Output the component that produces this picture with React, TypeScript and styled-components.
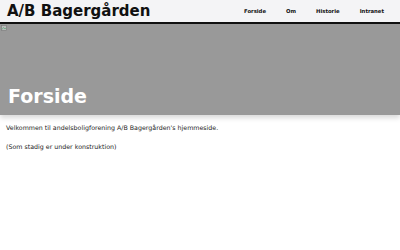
import React from "react";
import styled, { createGlobalStyle } from "styled-components";

const GlobalStyle = createGlobalStyle`
  html, body {
    margin: 0;
    padding: 0;
    background: #ffffff;
    font-family: "DejaVu Sans", Verdana, sans-serif;
    -webkit-font-smoothing: antialiased;
  }
  *, *::before, *::after {
    box-sizing: border-box;
  }
`;

const Header = styled.header`
  display: flex;
  align-items: center;
  justify-content: space-between;
  height: 24px;
  padding: 0 16px 0 7px;
  background-color: #f4f4f6;
  border-bottom: 2px solid #111;
`;

const Brand = styled.h1`
  margin: 0;
  font-size: 15px;
  font-weight: bold;
  color: #111;
  line-height: 22px;
`;

const Nav = styled.nav`
  display: flex;
  gap: 20px;
`;

const NavLink = styled.a`
  font-size: 5.3px;
  font-weight: bold;
  color: #111;
  text-decoration: none;
`;

const Hero = styled.section`
  position: relative;
  height: 91px;
  background-color: #999999;
  display: flex;
  align-items: flex-end;
  padding: 0 8px 8px;
  box-shadow: 0 3px 5px rgba(0, 0, 0, 0.15);
`;

const BrokenImage = styled.svg`
  position: absolute;
  top: 1px;
  left: 1px;
`;

const HeroTitle = styled.h2`
  margin: 0;
  font-size: 19px;
  font-weight: bold;
  color: #ffffff;
`;

const Content = styled.main`
  padding: 9px 6px;
  font-size: 6.3px;
  color: #222;
`;

const Paragraph = styled.p`
  margin: 0 0 11px;
  line-height: 8px;
`;

export default function App() {
  return (
    <>
      <GlobalStyle />
      <Header>
        <Brand>A/B Bagergården</Brand>
        <Nav>
          <NavLink href="#">Forside</NavLink>
          <NavLink href="#">Om</NavLink>
          <NavLink href="#">Historie</NavLink>
          <NavLink href="#">Intranet</NavLink>
        </Nav>
      </Header>
      <Hero>
        <BrokenImage width="6" height="6" viewBox="0 0 6 6">
          <rect x="0.5" y="0.5" width="5" height="5" fill="#bbb" stroke="#777" strokeWidth="0.6" />
          <path d="M1 4.5 L2.5 2.5 L4 4 L5 3" stroke="#5a7" strokeWidth="0.7" fill="none" />
        </BrokenImage>
        <HeroTitle>Forside</HeroTitle>
      </Hero>
      <Content>
        <Paragraph>Velkommen til andelsboligforening A/B Bagergården's hjemmeside.</Paragraph>
        <Paragraph>(Som stadig er under konstruktion)</Paragraph>
      </Content>
    </>
  );
}
